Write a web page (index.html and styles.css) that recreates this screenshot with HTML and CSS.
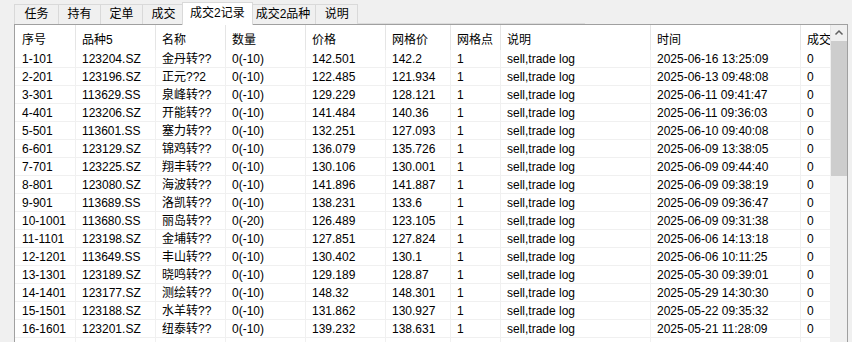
FILE: index.html
```html
<!DOCTYPE html>
<html lang="zh">
<head>
  <meta charset="UTF-8" />
  <title>成交2记录</title>
  <link rel="stylesheet" href="styles.css">
</head>
<body>
  <div class="tabs">
    <div class="tab first">任务</div>
    <div class="tab">持有</div>
    <div class="tab">定单</div>
    <div class="tab">成交</div>
    <div class="tab active">成交2记录</div>
    <div class="tab">成交2品种</div>
    <div class="tab">说明</div>
    <div class="tab-rest"></div>
  </div>

  <div class="pane">
    <div class="grid">
      <div class="row head">
        <div>序号</div><div>品种5</div><div>名称</div><div>数量</div><div>价格</div>
        <div>网格价</div><div>网格点</div><div>说明</div><div>时间</div><div>成交</div>
      </div>
      <div class="row"><div>1-101</div><div>123204.SZ</div><div>金丹转??</div><div>0(-10)</div><div>142.501</div><div>142.2</div><div>1</div><div>sell,trade log</div><div>2025-06-16 13:25:09</div><div>0</div></div>
      <div class="row"><div>2-201</div><div>123196.SZ</div><div>正元??2</div><div>0(-10)</div><div>122.485</div><div>121.934</div><div>1</div><div>sell,trade log</div><div>2025-06-13 09:48:08</div><div>0</div></div>
      <div class="row"><div>3-301</div><div>113629.SS</div><div>泉峰转??</div><div>0(-10)</div><div>129.229</div><div>128.121</div><div>1</div><div>sell,trade log</div><div>2025-06-11 09:41:47</div><div>0</div></div>
      <div class="row"><div>4-401</div><div>123206.SZ</div><div>开能转??</div><div>0(-10)</div><div>141.484</div><div>140.36</div><div>1</div><div>sell,trade log</div><div>2025-06-11 09:36:03</div><div>0</div></div>
      <div class="row"><div>5-501</div><div>113601.SS</div><div>塞力转??</div><div>0(-10)</div><div>132.251</div><div>127.093</div><div>1</div><div>sell,trade log</div><div>2025-06-10 09:40:08</div><div>0</div></div>
      <div class="row"><div>6-601</div><div>123129.SZ</div><div>锦鸡转??</div><div>0(-10)</div><div>136.079</div><div>135.726</div><div>1</div><div>sell,trade log</div><div>2025-06-09 13:38:05</div><div>0</div></div>
      <div class="row"><div>7-701</div><div>123225.SZ</div><div>翔丰转??</div><div>0(-10)</div><div>130.106</div><div>130.001</div><div>1</div><div>sell,trade log</div><div>2025-06-09 09:44:40</div><div>0</div></div>
      <div class="row"><div>8-801</div><div>123080.SZ</div><div>海波转??</div><div>0(-10)</div><div>141.896</div><div>141.887</div><div>1</div><div>sell,trade log</div><div>2025-06-09 09:38:19</div><div>0</div></div>
      <div class="row"><div>9-901</div><div>113689.SS</div><div>洛凯转??</div><div>0(-10)</div><div>138.231</div><div>133.6</div><div>1</div><div>sell,trade log</div><div>2025-06-09 09:36:47</div><div>0</div></div>
      <div class="row"><div>10-1001</div><div>113680.SS</div><div>丽岛转??</div><div>0(-20)</div><div>126.489</div><div>123.105</div><div>1</div><div>sell,trade log</div><div>2025-06-09 09:31:38</div><div>0</div></div>
      <div class="row"><div>11-1101</div><div>123198.SZ</div><div>金埔转??</div><div>0(-10)</div><div>127.851</div><div>127.824</div><div>1</div><div>sell,trade log</div><div>2025-06-06 14:13:18</div><div>0</div></div>
      <div class="row"><div>12-1201</div><div>113649.SS</div><div>丰山转??</div><div>0(-10)</div><div>130.402</div><div>130.1</div><div>1</div><div>sell,trade log</div><div>2025-06-06 10:11:25</div><div>0</div></div>
      <div class="row"><div>13-1301</div><div>123189.SZ</div><div>晓鸣转??</div><div>0(-10)</div><div>129.189</div><div>128.87</div><div>1</div><div>sell,trade log</div><div>2025-05-30 09:39:01</div><div>0</div></div>
      <div class="row"><div>14-1401</div><div>123177.SZ</div><div>测绘转??</div><div>0(-10)</div><div>148.32</div><div>148.301</div><div>1</div><div>sell,trade log</div><div>2025-05-29 14:30:30</div><div>0</div></div>
      <div class="row"><div>15-1501</div><div>123188.SZ</div><div>水羊转??</div><div>0(-10)</div><div>131.862</div><div>130.927</div><div>1</div><div>sell,trade log</div><div>2025-05-22 09:35:32</div><div>0</div></div>
      <div class="row"><div>16-1601</div><div>123201.SZ</div><div>纽泰转??</div><div>0(-10)</div><div>139.232</div><div>138.631</div><div>1</div><div>sell,trade log</div><div>2025-05-21 11:28:09</div><div>0</div></div>
      <div class="row"><div></div><div></div><div></div><div></div><div></div><div></div><div></div><div></div><div></div><div></div></div>
    </div>
    <div class="scrollbar">
      <div class="arrow">
        <svg width="16" height="16" viewBox="0 0 16 16"><polyline points="4.5,9.5 8,6 11.5,9.5" fill="none" stroke="#606060" stroke-width="1.5"/></svg>
      </div>
      <div class="thumb"></div>
    </div>
  </div>
</body>
</html>
```

FILE: styles.css
```css
body {
  margin: 0;
  background: #f0f0f0;
  font-family: "Liberation Sans", "Noto Sans CJK SC", sans-serif;
  font-size: 12px;
  color: #000;
  height: 342px;
  overflow: hidden;
}

.tabs {
  display: flex;
  align-items: flex-end;
  height: 24px;
  padding-left: 14px;
}

.tab {
  min-width: 43px;
  box-sizing: border-box;
  height: 20px;
  line-height: 18px;
  padding: 0 5px;
  text-align: center;
  border: 1px solid #d9d9d9;
  border-bottom: none;
  margin-right: -1px;
  background: #f0f0f0;
}

.tab.first {
  min-width: 45px;
}

.tab.active {
  position: relative;
  z-index: 1;
  height: 23px;
  line-height: 20px;
  padding: 0 7px;
  margin: 0 -3px -1px -2px;
  background: #fff;
}

.tab-rest {
  width: 228px;
  height: 1px;
  background: #dcdcdc;
}

.pane {
  display: flex;
  width: 832px;
  margin-left: 14px;
  border: 1px solid #a0a0a0;
  border-bottom: none;
  background: #fff;
  height: 330px;
  overflow: hidden;
}

.grid {
  width: 816px;
  overflow: hidden;
}

.row {
  display: grid;
  grid-template-columns: 61px 80px 70px 80px 80px 65px 50px 150px 150px 30px;
}

.row div {
  height: 18px;
  line-height: 18px;
  padding-left: 6px;
  box-sizing: border-box;
  white-space: nowrap;
  overflow: hidden;
  border-right: 1px solid #f0f0f0;
  border-bottom: 1px solid #f0f0f0;
}

.row div:first-child {
  padding-left: 7px;
}

.row.head div {
  height: 25px;
  line-height: 30px;
  border-bottom: none;
  border-right-color: #e5e5e5;
}

.scrollbar {
  width: 16px;
  background: #f0f0f0;
}

.arrow {
  height: 16px;
  display: flex;
  align-items: center;
  justify-content: center;
}

.thumb {
  height: 135px;
  background: #cdcdcd;
}
```
